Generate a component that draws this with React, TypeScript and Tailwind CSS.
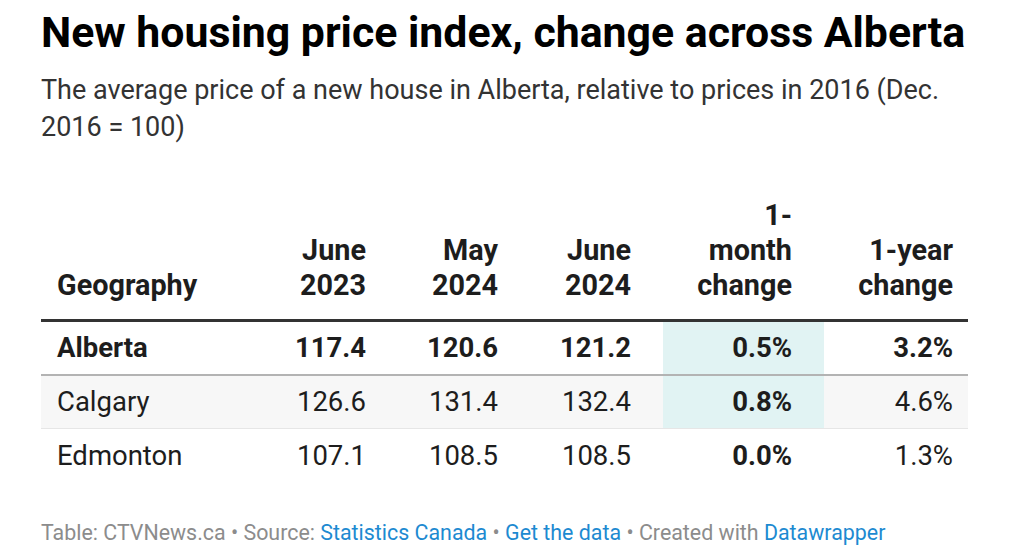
import React from "react";

const rows = [
  { name: "Alberta", a: "117.4", b: "120.6", c: "121.2", d: "0.5%", e: "3.2%", bold: true, bg: "bg-white", hl: true, border: "border-b-2 border-[#b3b3b3] h-[54px]" },
  { name: "Calgary", a: "126.6", b: "131.4", c: "132.4", d: "0.8%", e: "4.6%", bold: false, bg: "bg-[#f7f7f7]", hl: true, border: "border-b border-[#e6e6e6] h-[53px]" },
  { name: "Edmonton", a: "107.1", b: "108.5", c: "108.5", d: "0.0%", e: "1.3%", bold: false, bg: "bg-white", hl: false, border: "h-[53px]" },
];

export default function App() {
  return (
    <div className="w-[1024px] h-[558px] bg-white overflow-hidden text-[#1d1d1d]" style={{ fontFamily: "Roboto, 'Liberation Sans', sans-serif" }}>
      <div className="pl-[41px] pr-[56px] pt-[7px]">
        <h1 className="text-[42.8px] leading-[50px] font-bold text-black whitespace-nowrap">New housing price index, change across Alberta</h1>
        <p className="mt-[15px] text-[27px] leading-[37px] text-[#333]">The average price of a new house in Alberta, relative to prices in 2016 (Dec. 2016 = 100)</p>

        <div className="mt-[52px] w-[927px]">
          <div className="grid grid-cols-[225px_132px_132px_133px_161px_144px] items-end border-b-[3px] border-[#333] pb-[16px] text-[28.8px] leading-[35px] font-bold">
            <div className="pl-[16px]">Geography</div>
            <div className="text-right pr-[32px]">June<br />2023</div>
            <div className="text-right pr-[32px]">May<br />2024</div>
            <div className="text-right pr-[32px]">June<br />2024</div>
            <div className="text-right pr-[32px]">1-<br />month<br />change</div>
            <div className="text-right pr-[15px]">1-year<br />change</div>
          </div>
          {rows.map((r) => (
            <div key={r.name} className={`grid grid-cols-[225px_132px_132px_133px_161px_144px] items-stretch text-[27.5px] ${r.bg} ${r.border} ${r.bold ? "font-bold" : ""}`}>
              <div className="pl-[16px] flex items-center">{r.name}</div>
              <div className="pr-[32px] flex items-center justify-end">{r.a}</div>
              <div className="pr-[32px] flex items-center justify-end">{r.b}</div>
              <div className="pr-[32px] flex items-center justify-end">{r.c}</div>
              <div className={`pr-[32px] flex items-center justify-end font-bold ${r.hl ? "bg-[#e1f3f3]" : ""}`}>{r.d}</div>
              <div className="pr-[15px] flex items-center justify-end">{r.e}</div>
            </div>
          ))}
        </div>

        <div className="mt-[37px] text-[21.4px] leading-[28px] text-[#8c8c8c]">
          Table: CTVNews.ca • Source: <span className="text-[#1d8ad1]">Statistics Canada</span> • <span className="text-[#1d8ad1]">Get the data</span> • Created with <span className="text-[#1d8ad1]">Datawrapper</span>
        </div>
      </div>
    </div>
  );
}
